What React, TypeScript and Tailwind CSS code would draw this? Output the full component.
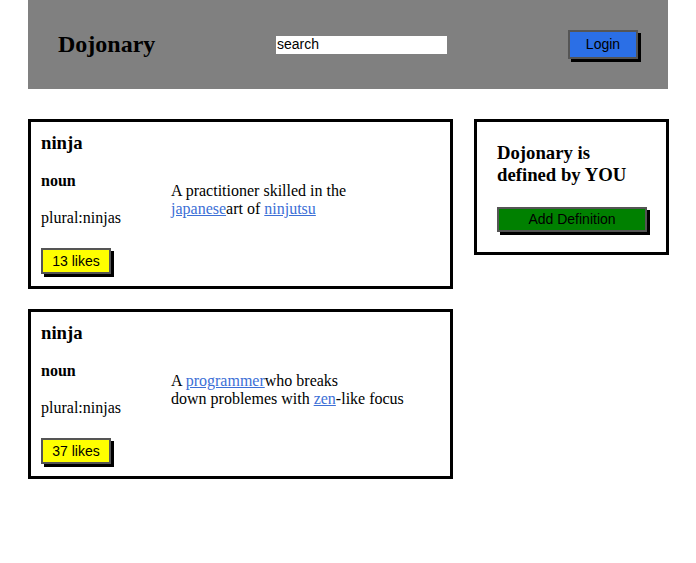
import React from "react";

const serif = { fontFamily: '"Liberation Serif", "Times New Roman", serif' };

function Link({ children }: { children: React.ReactNode }) {
  return <a className="text-[#3c6fd6] underline">{children}</a>;
}

function Card({ def, likes }: { def: React.ReactNode; likes: number }) {
  return (
    <div className="h-[170px] border-[3px] border-black bg-white pl-[10px] pt-[10px]">
      <h3 className="text-[18.72px] font-bold leading-[21px]">ninja</h3>
      <div className="mt-[19px] flex">
        <div className="w-[130px] shrink-0">
          <h4 className="text-[16px] font-bold leading-[18px]">noun</h4>
          <p className="mt-[19px] text-[16px] leading-[18px]">plural:ninjas</p>
        </div>
        <div className="pt-[10px] text-[16px] leading-[18px]">{def}</div>
      </div>
      <button
        className="mt-[21px] flex h-[26px] w-[70px] items-center justify-center border-2 border-[#555] bg-[#ffff00] text-[14px] text-black shadow-[3px_3px_0_#000]"
        style={{ fontFamily: '"Liberation Sans", Arial, sans-serif' }}
      >
        {likes} likes
      </button>
    </div>
  );
}

export default function App() {
  return (
    <div className="mx-[28px] bg-white text-black" style={serif}>
      <header className="flex h-[89px] items-center bg-[#808080] pl-[30px] pr-[30px]">
        <h1 className="w-[97px] whitespace-nowrap pb-[1px] text-[24px] font-bold leading-[28px]">Dojonary</h1>
        <input
          className="ml-[121px] h-[18px] w-[171px] bg-white px-[1px] text-[14px] text-black outline-none"
          style={{ fontFamily: '"Liberation Sans", Arial, sans-serif' }}
          defaultValue="search"
        />
        <button
          className="ml-auto flex h-[29px] w-[70px] items-center justify-center border-2 border-[#555] bg-[#2b6fe6] text-[14px] text-black shadow-[3px_3px_0_#000]"
          style={{ fontFamily: '"Liberation Sans", Arial, sans-serif' }}
        >
          Login
        </button>
      </header>
      <main className="mt-[30px] flex items-start">
        <div className="flex w-[425px] shrink-0 flex-col gap-[20px]">
          <Card
            likes={13}
            def={
              <>
                <span className="block">A practitioner skilled in the</span>
                <span className="block">
                  <Link>japanese</Link>art of <Link>ninjutsu</Link>
                </span>
              </>
            }
          />
          <Card
            likes={37}
            def={
              <>
                <span className="block">
                  A <Link>programmer</Link>who breaks
                </span>
                <span className="block">
                  down problemes with <Link>zen</Link>-like focus
                </span>
              </>
            }
          />
        </div>
        <aside className="ml-[21px] h-[136px] w-[195px] shrink-0 border-[3px] border-black bg-white px-[20px] pt-[20px]">
          <h3 className="w-[150px] text-[18.72px] font-bold leading-[22px]">Dojonary is defined by YOU</h3>
          <button
            className="mt-[21px] flex h-[25px] w-[150px] items-center justify-center border-2 border-[#555] bg-[#008000] text-[14px] text-black shadow-[3px_3px_0_#000]"
            style={{ fontFamily: '"Liberation Sans", Arial, sans-serif' }}
          >
            Add Definition
          </button>
        </aside>
      </main>
    </div>
  );
}
